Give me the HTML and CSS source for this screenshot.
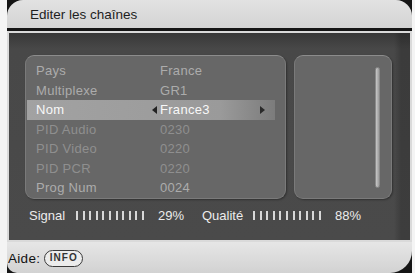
FILE: index.html
```html
<!DOCTYPE html>
<html lang="fr">

<head>
    <meta charset="UTF-8">
    <title>Editer les chaînes</title>
    <link rel="stylesheet" href="styles.css">
</head>

<body>

    <div class="screen">
        <div class="header">Editer les chaînes</div>

        <div class="panel">
            <div class="boxes">
                <div class="box list">
                    <div class="row"><span class="lbl">Pays</span><span class="val">France</span></div>
                    <div class="row"><span class="lbl">Multiplexe</span><span class="val">GR1</span></div>
                    <div class="row selected">
                        <span class="lbl">Nom</span>
                        <span class="arrow-left"></span>
                        <span class="val">France3</span>
                        <span class="arrow-right"></span>
                    </div>
                    <div class="row dim"><span class="lbl">PID Audio</span><span class="val">0230</span></div>
                    <div class="row dim"><span class="lbl">PID Video</span><span class="val">0220</span></div>
                    <div class="row dim"><span class="lbl">PID PCR</span><span class="val">0220</span></div>
                    <div class="row"><span class="lbl">Prog Num</span><span class="val">0024</span></div>
                </div>
                <div class="box side">
                    <div class="scrollbar"></div>
                </div>
            </div>

            <div class="signal">
                <span class="sig-label">Signal</span>
                <span class="bars" id="signalBars"></span>
                <span class="pct">29%</span>
                <span class="q-label">Qualité</span>
                <span class="bars" id="qualityBars"></span>
                <span class="pct">88%</span>
            </div>
        </div>

        <div class="footer">
            <span class="aide">Aide:</span>
            <span class="info">INFO</span>
        </div>
    </div>

    <script>
        // level bars
        function fillBars(id, count) {
            const el = document.getElementById(id);
            for (let i = 0; i < count; i++) {
                const bar = document.createElement('i');
                el.appendChild(bar);
            }
        }

        fillBars('signalBars', 11);
        fillBars('qualityBars', 11);
    </script>

</body>

</html>
```

FILE: styles.css
```css
body {
    margin: 0;
    width: 415px;
    height: 273px;
    overflow: hidden;
    background-color: #f4f4f4;
    font-family: 'Liberation Sans', Arial, sans-serif;
}

.screen {
    margin-left: 7px;
    width: 405px;
    height: 273px;
    background-color: #151515;
}

.header {
    height: 28px;
    padding-left: 23px;
    line-height: 30px;
    font-size: 13.5px;
    color: #1e1e1e;
    background: linear-gradient(180deg, #e2e2e2 0%, #d4d4d4 100%);
    border-radius: 16px 16px 0 0;
}

.panel {
    margin-top: 3px;
    height: 211px;
    padding: 22px 0 0 16px;
    box-sizing: border-box;
    border: 2px solid #dadada;
    background:
        linear-gradient(90deg, rgba(0, 0, 0, 0) 385px, rgba(0, 0, 0, 0.18) 392px),
        linear-gradient(180deg, #383838 0, #484848 16px, #4a4a4a 100%);
}

.boxes {
    display: flex;
    gap: 8px;
}

.box {
    height: 144px;
    box-sizing: border-box;
    background-color: #676767;
    border: 1px solid #7a7a7a;
    border-top-color: #8c8c8c;
    border-radius: 9px;
    box-shadow: 1px 1px 2px rgba(0, 0, 0, 0.35);
}

.list {
    width: 261px;
    padding-top: 5px;
}

.side {
    width: 98px;
    padding: 11px 0 0 80px;
}

.scrollbar {
    width: 5px;
    height: 121px;
    border-radius: 3px;
    background: linear-gradient(90deg, #c8c8c8, #9c9c9c);
    border: 1px solid #8a8a8a;
    box-sizing: border-box;
}

.row {
    display: flex;
    align-items: center;
    width: 248px;
    height: 19.5px;
    margin-left: 1px;
    padding-left: 9px;
    box-sizing: border-box;
    font-size: 13px;
    letter-spacing: 0.3px;
    color: #acacac;
}

.row.dim {
    color: #8f8f8f;
}

.lbl {
    width: 124px;
}

.row.selected {
    color: #f8f8f8;
    background: linear-gradient(90deg, #a2a2a2 0%, #9a9a9a 78%, #7c7c7c 100%);
}

.row.selected .lbl {
    width: 116px;
}

.row.selected .val {
    flex: 1;
}

.arrow-left {
    width: 0;
    height: 0;
    margin-right: 3px;
    border-top: 4px solid transparent;
    border-bottom: 4px solid transparent;
    border-right: 5px solid #222;
}

.arrow-right {
    width: 0;
    height: 0;
    margin-right: 10px;
    border-top: 4px solid transparent;
    border-bottom: 4px solid transparent;
    border-left: 5px solid #2a2a2a;
}

.signal {
    display: flex;
    align-items: center;
    height: 16px;
    margin-top: 8px;
    padding-left: 4px;
    font-size: 13px;
    color: #ececec;
}

.sig-label {
    width: 47px;
}

.q-label {
    width: 51px;
}

.pct {
    width: 44px;
}

.bars {
    display: flex;
    justify-content: space-between;
    width: 68px;
    margin-right: 14px;
}

.bars i {
    display: block;
    width: 2px;
    height: 9px;
    background-color: #d8d8d8;
}

.footer {
    display: flex;
    align-items: center;
    height: 31px;
    padding: 2px 0 0 1px;
    box-sizing: border-box;
    background: linear-gradient(180deg, #e6e6e6 0%, #d2d2d2 100%);
    border-radius: 0 0 22px 10px;
    font-size: 13.5px;
    letter-spacing: 0.3px;
    color: #111;
}

.aide {
    margin-right: 4px;
}

.info {
    width: 39px;
    height: 17px;
    box-sizing: border-box;
    border: 1.5px solid #3a3a3a;
    border-radius: 9px;
    background-color: #ececec;
    font-size: 10px;
    font-weight: bold;
    letter-spacing: 1px;
    color: #333;
    text-align: center;
    line-height: 14px;
}
```
